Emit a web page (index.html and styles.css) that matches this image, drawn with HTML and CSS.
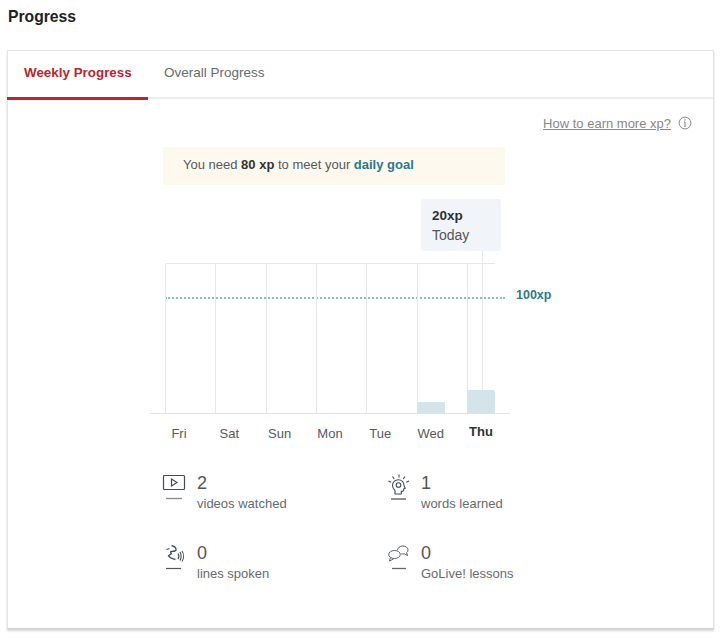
FILE: index.html
```html
<!DOCTYPE html>
<html lang="en">
<head>
<meta charset="utf-8">
<title>Progress</title>
<link rel="stylesheet" href="styles.css">
</head>
<body>
<h1 class="title">Progress</h1>
<section class="card">
  <nav class="tabs">
    <div class="tab tab-active">Weekly Progress</div>
    <div class="tab">Overall Progress</div>
  </nav>
  <div class="help">
    <a class="help-link">How to earn more xp?</a>
    <svg class="help-icon" width="14" height="14" viewBox="0 0 14 14"><circle cx="7" cy="7" r="5.9" fill="none" stroke="#8a8a8a"/><path d="M7 6v4.2M5.9 10.2h2.2M6 6h1" fill="none" stroke="#8a8a8a"/><circle cx="7" cy="4" r=".8" fill="#8a8a8a"/></svg>
  </div>
  <div class="notice">You need <b>80 xp</b> to meet your <b class="teal">daily goal</b></div>
  <div class="chart">
    <div class="tooltip"><b>20xp</b><span>Today</span></div>
    <div class="stem"></div>
    <div class="goal"></div>
    <div class="goal-label">100xp</div>
    <div class="plot">
      <div class="col"></div>
      <div class="col"></div>
      <div class="col"></div>
      <div class="col"></div>
      <div class="col"></div>
      <div class="col"><div class="bar bar-wed"></div></div>
      <div class="col"><div class="bar bar-thu"></div></div>
    </div>
    <div class="days">
      <span>Fri</span><span>Sat</span><span>Sun</span><span>Mon</span><span>Tue</span><span>Wed</span><span class="today">Thu</span>
    </div>
  </div>
  <div class="stats">
    <div class="stat">
      <svg class="stat-icon" width="26" height="30" viewBox="0 0 26 30"><rect x="1.5" y="2.5" width="21" height="14" rx="1" fill="none" stroke="#444b55" stroke-width="1.2"/><path d="M9.5 6v7l5.5-3.5z" fill="none" stroke="#444b55" stroke-width="1.2"/><path d="M4 25.5h16" stroke="#8b8f95" stroke-width="1.4"/></svg>
      <div class="stat-text"><div class="num">2</div><div class="label">videos watched</div></div>
    </div>
    <div class="stat">
      <svg class="stat-icon" width="26" height="30" viewBox="0 0 26 30"><path d="M9 21v-3.5c-1.800-1.500-2.500-3-2.500-5 0-3.300 2.500-5.800 5.800-5.800s5.700 2.500 5.700 5.500c0 .8.8 2 1.300 3l-1.500.6c0 2-.3 2.500-2.500 2.400v2.800z" fill="none" stroke="#444b55" stroke-width="1.100"/><circle cx="12.500" cy="12" r="2.300" fill="none" stroke="#444b55" stroke-width="1.100"/><path d="M13 1.500v3M6.500 3.500l1.800 2.300M19 3.500l-1.800 2.300M2.500 8l2.700 1.300M23 8l-2.700 1.300" stroke="#444b55" stroke-width="1.100" fill="none"/><path d="M5 26h15" stroke="#555" stroke-width="1.300"/></svg>
      <div class="stat-text"><div class="num">1</div><div class="label">words learned</div></div>
    </div>
    <div class="stat">
      <svg class="stat-icon" width="26" height="30" viewBox="0 0 26 30"><path d="M9.500 2.500c3 .8 4.800 2.500 4.500 4.500-.3 1.500-3.800 1.300-4.800 1.500-1.200.3-.2 1.500.2 2.200l-2.900 2.100c1.500 2.800 4.500 3 7 3.700" fill="none" stroke="#444b55" stroke-width="1.300"/><path d="M4.500 6.500l3-1" stroke="#444b55" stroke-width="1.300"/><path d="M16 10.500c1 1.500 1 4 0 5.500M18 9c1.500 2.300 1.500 6.300 0 8.500M20 8c2 3 2 7.500 0 10.500" fill="none" stroke="#444b55" stroke-width="1.100"/><path d="M4 25.500h15" stroke="#555" stroke-width="1.200"/></svg>
      <div class="stat-text"><div class="num">0</div><div class="label">lines spoken</div></div>
    </div>
    <div class="stat">
      <svg class="stat-icon" width="26" height="30" viewBox="0 0 26 30"><ellipse cx="8.500" cy="11.500" rx="5.800" ry="4" fill="none" stroke="#5a6069" stroke-width="1"/><path d="M4.500 14.500l-1 3.500 4-2" fill="none" stroke="#5a6069" stroke-width="1"/><path d="M11.300 7.200c.6-2.500 2.600-4.200 5.200-4.200 3 0 5.500 1.600 5.500 3.900 0 1.100-.5 2.100-1.400 2.700l1 3-3.300-1.900c-1 .3-2 .3-3 .1" fill="none" stroke="#5a6069" stroke-width="1"/><path d="M6 25.500h14" stroke="#666" stroke-width="1.300"/></svg>
      <div class="stat-text"><div class="num">0</div><div class="label">GoLive! lessons</div></div>
    </div>
  </div>
</section>
</body>
</html>
```

FILE: styles.css
```css
* { box-sizing: border-box; }
html, body { margin: 0; padding: 0; background: #fff; }
body {
  width: 724px;
  height: 638px;
  overflow: hidden;
  font-family: "Liberation Sans", Arial, sans-serif;
  color: #555a60;
  font-size: 13px;
}
.title {
  margin: 0;
  padding: 8px 0 0 8px;
  height: 50px;
  font-size: 15.7px;
  line-height: 18px;
  font-weight: bold;
  color: #222;
}
.card {
  margin-left: 7px;
  width: 707px;
  height: 579px;
  border: 1px solid #e3e3e3;
  border-bottom-color: #cfcfcf;
  box-shadow: 0 2px 2px #d6d6d6;
  background: #fff;
}
.tabs {
  display: flex;
  height: 48px;
  border-bottom: 2px solid #ececec;
}
.tab {
  height: 49px;
  padding: 14px 16px 0;
  font-size: 13.5px;
  line-height: 16px;
  color: #666b70;
  white-space: nowrap;
}
.tab-active {
  width: 141px;
  margin-left: -1px;
  padding-left: 17px;
  font-size: 13.4px;
  font-weight: bold;
  color: #b8262f;
  border-bottom: 3px solid #b8262f;
}
.help {
  display: flex;
  justify-content: flex-end;
  align-items: center;
  gap: 7px;
  height: 16px;
  margin-top: 16px;
  padding-right: 21px;
}
.help-link {
  color: #888;
  font-size: 13px;
  text-decoration: underline;
}
.notice {
  margin: 16px 0 0 155px;
  width: 342px;
  height: 38px;
  padding-left: 20px;
  background: #fdf9ee;
  line-height: 36px;
  color: #555a60;
}
.notice b { color: #333; }
.notice .teal { color: #2b7a90; }
.chart {
  position: relative;
  margin: 14px 0 0 142px;
  width: 360px;
  padding: 64px 0 0 15px;
}
.tooltip {
  position: absolute;
  left: 271px;
  top: 0;
  width: 80px;
  height: 52px;
  padding: 7px 11px;
  background: #f1f4f9;
  border-radius: 2px;
  font-size: 14px;
  line-height: 19px;
  color: #555;
}
.tooltip b { display: block; color: #2b2f36; font-size: 13.5px; }
.tooltip span { display: block; margin-top: 1px; }
.stem {
  position: absolute;
  left: 332px;
  top: 52px;
  height: 162px;
  width: 1px;
  background: #e8e8e8;
}
.goal {
  position: absolute;
  left: 15px;
  top: 98px;
  width: 340px;
  border-top: 2px dotted #8dbcc0;
}
.goal-label {
  position: absolute;
  left: 366px;
  top: 88px;
  font-weight: bold;
  font-size: 12.5px;
  line-height: 16px;
  color: #2b7a90;
}
.plot {
  position: relative;
  display: grid;
  grid-template-columns: repeat(6, 50.33px) 28px;
  height: 151px;
  margin-left: -15px;
  padding-left: 15px;
  align-items: end;
}
.plot::before {
  content: "";
  position: absolute;
  left: 15px;
  top: 0;
  width: 330px;
  border-top: 1px solid #e8e8e8;
}
.plot::after {
  content: "";
  position: absolute;
  left: 0;
  bottom: 0;
  width: 360px;
  border-bottom: 1px solid #e2e2e2;
}
.col {
  height: 100%;
  border-left: 1px solid #e8e8e8;
  display: flex;
  align-items: flex-end;
}
.bar {
  width: 28px;
  margin-left: -1px;
  background: #d3e4ea;
  border-radius: 2px 2px 0 0;
}
.bar-wed { height: 12px; }
.bar-thu { height: 24px; }
.days {
  display: grid;
  grid-template-columns: repeat(6, 50.33px) 28px;
  margin-top: 12px;
  height: 16px;
  line-height: 16px;
  font-size: 13px;
  color: #555a60;
}
.days span { white-space: nowrap; width: 28px; display: flex; justify-content: center; }
.days .today { font-weight: bold; color: #333; margin-top: -2px; }
.stats {
  display: grid;
  grid-template-columns: 224px 220px;
  grid-auto-rows: 70px;
  margin: 30px 0 0 154px;
}
.stat { display: flex; align-items: flex-start; }
.stat-icon { flex: none; margin-top: 1px; }
.stat-text { margin-left: 9px; }
.num { font-size: 18px; line-height: 22px; color: #555; }
.label { font-size: 13px; line-height: 18px; color: #666b70; margin-top: 1px; }
```
